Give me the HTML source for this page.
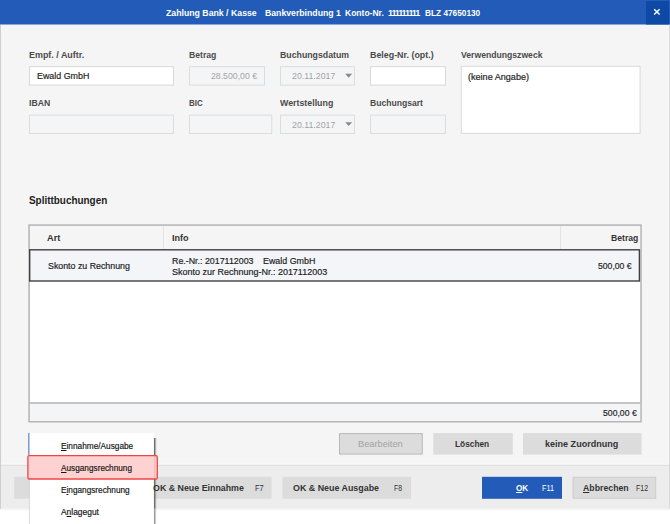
<!DOCTYPE html>
<html lang="de">
<head>
<meta charset="utf-8">
<title>Zahlung Bank / Kasse</title>
<style>
html,body{margin:0;padding:0;}
body{width:670px;height:524px;overflow:hidden;background:#fff;position:relative;font-family:"Liberation Sans",sans-serif;font-size:10px;color:#333;}
#bg{position:absolute;left:0;top:0;}
.t{position:absolute;white-space:nowrap;line-height:14px;height:14px;display:inline-block;transform-origin:0 50%;}
u{text-decoration:underline;text-underline-offset:1px;text-decoration-thickness:1px;}
</style>
</head>
<body>
<svg id="bg" width="670" height="524" viewBox="0 0 670 524">
<rect x="0" y="0" width="670" height="465" fill="#f5f5f5" />
<rect x="0" y="463.6" width="670" height="1" fill="#f9f9f9" />
<rect x="0" y="465" width="670" height="43.7" fill="#ededed" />
<rect x="0" y="464.8" width="670" height="1.1" fill="#dedede" />
<rect x="0" y="508.7" width="670" height="1.0" fill="#ededed" opacity="0.6"/>
<rect x="0" y="509.7" width="670" height="0.9" fill="#ededed" opacity="0.25"/>
<rect x="0" y="24.5" width="1" height="484.3" fill="#cfcfcf" />
<rect x="669" y="24.5" width="1" height="484.3" fill="#dadada" />
<rect x="0" y="0" width="670" height="24.5" fill="#225cb8" />
<rect x="646" y="1" width="23" height="23.5" fill="#0f49a6" />
<path d="M654.2 9.2 L659.6 14.6 M659.6 9.2 L654.2 14.6" stroke="#fff" stroke-width="1.45" fill="none"/>
<rect x="29" y="66.2" width="145" height="19.4" fill="#d9d9d9" /><rect x="30" y="67.2" width="143" height="17.4" fill="#fff" />
<rect x="189" y="66.2" width="76" height="19.4" fill="#dcdcdc" /><rect x="190" y="67.2" width="74" height="17.4" fill="#f4f5f7" />
<rect x="280" y="66.2" width="75" height="19.4" fill="#dcdcdc" /><rect x="281" y="67.2" width="73" height="17.4" fill="#f4f5f7" />
<rect x="370" y="66.2" width="76" height="19.4" fill="#d9d9d9" /><rect x="371" y="67.2" width="74" height="17.4" fill="#fff" />
<rect x="460.8" y="65.8" width="179.8" height="68.0" fill="#d9d9d9" /><rect x="461.8" y="66.8" width="177.8" height="66.0" fill="#fff" />
<rect x="29" y="114.6" width="145" height="19.4" fill="#dcdcdc" /><rect x="30" y="115.6" width="143" height="17.4" fill="#f4f5f7" />
<rect x="189" y="114.6" width="83.3" height="19.4" fill="#dcdcdc" /><rect x="190" y="115.6" width="81.3" height="17.4" fill="#f4f5f7" />
<rect x="280" y="114.6" width="75" height="19.4" fill="#dcdcdc" /><rect x="281" y="115.6" width="73" height="17.4" fill="#f4f5f7" />
<rect x="370" y="114.6" width="76" height="19.4" fill="#dcdcdc" /><rect x="371" y="115.6" width="74" height="17.4" fill="#f4f5f7" />
<path d="M345.2 73.8 L352.1 73.8 L348.65 77.7 Z" fill="#8a8a8a"/>
<path d="M345.2 122.2 L352.1 122.2 L348.65 126.10000000000001 Z" fill="#8a8a8a"/>
<rect x="28.3" y="224.3" width="613.5" height="198.2" fill="#b5b5b8" /><rect x="29.85" y="225.85" width="610.4" height="195.1" fill="#fff" />
<rect x="30" y="226" width="610.1" height="24" fill="#f5f5f5" />
<rect x="163.4" y="226" width="1" height="23" fill="#dadada" />
<rect x="164.4" y="226" width="1" height="23" fill="#fbfbfb" />
<rect x="560.4" y="226" width="1" height="23" fill="#dadada" />
<rect x="561.4" y="226" width="1" height="23" fill="#fbfbfb" />
<rect x="29" y="249.1" width="611.1" height="32.6" fill="#404040" /><rect x="30.4" y="250.5" width="608.3" height="29.8" fill="#f4f5f9" />
<rect x="30" y="402.3" width="610.1" height="1.5" fill="#ababad" />
<rect x="30" y="403.8" width="610.1" height="17.1" fill="#f4f5f7" />
<rect x="339" y="433.1" width="83.8" height="21.5" fill="#b9b9b9" /><rect x="340" y="434.1" width="81.8" height="19.5" fill="#dcdcdc" />
<rect x="433.3" y="433.1" width="79.5" height="21.5" fill="#dcdcdc" />
<rect x="523" y="433.1" width="118.5" height="21.5" fill="#dcdcdc" />
<rect x="14.2" y="476.8" width="119" height="22.0" fill="#dcdcdc" />
<rect x="143" y="476.8" width="128.6" height="22.0" fill="#dcdcdc" />
<rect x="282.4" y="476.8" width="128.6" height="22.0" fill="#dcdcdc" />
<rect x="482" y="476.8" width="80" height="22.0" fill="#225cb8" />
<rect x="572.5" y="476.8" width="83.7" height="22.0" fill="#cdcdcd" /><rect x="573.5" y="477.8" width="81.7" height="20.0" fill="#dcdcdc" />
<rect x="153.8" y="438" width="1.6" height="70.8" fill="#6e6e6e" />
<rect x="155.4" y="438" width="1.0" height="70.8" fill="#000" opacity="0.13"/>
<rect x="153.8" y="508.8" width="1.6" height="15.2" fill="#9a9a9a" />
<rect x="155.4" y="508.8" width="1.0" height="15.2" fill="#000" opacity="0.06"/>
<rect x="28.1" y="433" width="1.6" height="22" fill="#6f95d0" />
<rect x="29.7" y="433.2" width="124.1" height="91" fill="#fff" />
<rect x="28.9" y="479" width="0.9" height="45" fill="#d6d6d6" />
<rect x="27.9" y="455.7" width="129.4" height="23.3" rx="1.3" fill="#ffcccc" fill-opacity="0.88" stroke="#f04444" stroke-width="1.3"/>
</svg>
<span class="t" id="tt" style="left:165.5px;top:6.30px;font-size:9px;font-weight:bold;color:#fff;transform:scaleX(0.9697);">Zahlung Bank / Kasse</span>
<span class="t" id="tt2" style="left:265.2px;top:6.30px;font-size:9px;font-weight:bold;color:#fff;transform:scaleX(0.9654);">Bankverbindung 1</span>
<span class="t" id="tt2b" style="left:344.9px;top:6.30px;font-size:9px;font-weight:bold;color:#fff;transform:scaleX(0.9463);">Konto-Nr.</span>
<span class="t" id="tt2c" style="left:387.6px;top:6.30px;font-size:9px;font-weight:bold;color:#fff;transform:scaleX(1.0119);"><span style="letter-spacing:-1.15px">111111111</span></span>
<span class="t" id="tt3" style="left:424.9px;top:6.30px;font-size:9px;font-weight:bold;color:#fff;transform:scaleX(0.9193);">BLZ 47650130</span>
<span class="t" id="l1" style="left:28.7px;top:48.30px;font-size:9.1px;font-weight:bold;color:#4a4a4a;transform:scaleX(0.9813);">Empf. / Auftr.</span>
<span class="t" id="v1" style="left:37px;top:69.30px;font-size:9.1px;-webkit-text-stroke:0.18px #222;color:#222;transform:scaleX(0.9761);">Ewald GmbH</span>
<span class="t" id="l2" style="left:189px;top:48.30px;font-size:9.1px;font-weight:bold;color:#4a4a4a;transform:scaleX(0.9475);">Betrag</span>
<span class="t" id="v2" style="left:211.2px;top:69.30px;font-size:9.1px;color:#a3a3a3;transform:scaleX(0.9574);">28.500,00 €</span>
<span class="t" id="l3" style="left:280px;top:48.30px;font-size:9.1px;font-weight:bold;color:#4a4a4a;transform:scaleX(0.9631);">Buchungsdatum</span>
<span class="t" id="v3" style="left:292.4px;top:69.30px;font-size:9.1px;color:#a3a3a3;transform:scaleX(0.9656);">20.11.2017</span>
<span class="t" id="l4" style="left:370px;top:48.30px;font-size:9.1px;font-weight:bold;color:#4a4a4a;transform:scaleX(0.9759);">Beleg-Nr. (opt.)</span>
<span class="t" id="l5" style="left:460.5px;top:48.30px;font-size:9.1px;font-weight:bold;color:#4a4a4a;transform:scaleX(0.9485);">Verwendungszweck</span>
<span class="t" id="v5" style="left:468.3px;top:70.30px;font-size:9.1px;-webkit-text-stroke:0.18px #222;color:#222;transform:scaleX(0.9969);">(keine Angabe)</span>
<span class="t" id="l6" style="left:28.7px;top:96.30px;font-size:9.1px;font-weight:bold;color:#4a4a4a;transform:scaleX(0.9535);">IBAN</span>
<span class="t" id="l7" style="left:189px;top:96.30px;font-size:9.1px;font-weight:bold;color:#4a4a4a;transform:scaleX(0.8806);">BIC</span>
<span class="t" id="l8" style="left:280px;top:96.30px;font-size:9.1px;font-weight:bold;color:#4a4a4a;transform:scaleX(0.9707);">Wertstellung</span>
<span class="t" id="v8" style="left:292.4px;top:118.30px;font-size:9.1px;color:#a3a3a3;transform:scaleX(0.9656);">20.11.2017</span>
<span class="t" id="l9" style="left:370px;top:96.30px;font-size:9.1px;font-weight:bold;color:#4a4a4a;transform:scaleX(0.9448);">Buchungsart</span>
<span class="t" id="h1" style="left:29.3px;top:193.30px;font-size:11px;font-weight:bold;color:#222;transform:scaleX(0.9013);">Splittbuchungen</span>
<span class="t" id="c1" style="left:47.2px;top:231.30px;font-size:9.1px;font-weight:bold;color:#333;transform:scaleX(1.0197);">Art</span>
<span class="t" id="c2" style="left:172.2px;top:231.30px;font-size:9.1px;font-weight:bold;color:#333;transform:scaleX(0.9897);">Info</span>
<span class="t" id="c3" style="left:610.7px;top:231.30px;font-size:9.1px;font-weight:bold;color:#333;transform:scaleX(0.9475);">Betrag</span>
<span class="t" id="r1" style="left:47.5px;top:259.30px;font-size:9.1px;-webkit-text-stroke:0.18px #222;color:#222;transform:scaleX(0.9699);">Skonto zu Rechnung</span>
<span class="t" id="r2" style="left:172px;top:254.30px;font-size:9.1px;-webkit-text-stroke:0.18px #222;color:#222;transform:scaleX(0.9730);">Re.-Nr.: 2017112003</span>
<span class="t" id="r2b" style="left:262.8px;top:254.30px;font-size:9.1px;-webkit-text-stroke:0.18px #222;color:#222;transform:scaleX(0.9780);">Ewald GmbH</span>
<span class="t" id="r3" style="left:172px;top:265.30px;font-size:9.1px;-webkit-text-stroke:0.18px #222;color:#222;transform:scaleX(0.9881);">Skonto zur Rechnung-Nr.: 2017112003</span>
<span class="t" id="r4" style="left:598.4px;top:259.30px;font-size:9.1px;-webkit-text-stroke:0.18px #222;color:#222;transform:scaleX(0.9490);">500,00 €</span>
<span class="t" id="f1" style="left:603.3px;top:406.30px;font-size:9.1px;-webkit-text-stroke:0.18px #222;color:#222;transform:scaleX(0.9518);">500,00 €</span>
<span class="t" id="b1" style="left:358.1px;top:437.30px;font-size:9.1px;color:#a3a3a3;transform:scaleX(1.0159);">Bearbeiten</span>
<span class="t" id="b2" style="left:455.3px;top:437.30px;font-size:9.1px;font-weight:bold;color:#333;transform:scaleX(0.9143);">Löschen</span>
<span class="t" id="b3" style="left:545.2px;top:437.30px;font-size:9.1px;font-weight:bold;color:#333;transform:scaleX(0.9937);">keine Zuordnung</span>
<span class="t" id="b4" style="left:153.4px;top:481.30px;font-size:9.1px;font-weight:bold;color:#333;transform:scaleX(0.9724);">OK &amp; Neue Einnahme</span>
<span class="t" id="b4k" style="left:255px;top:481.30px;font-size:8.9px;color:#333;transform:scaleX(0.8302);">F7</span>
<span class="t" id="b5" style="left:292.7px;top:481.30px;font-size:9.1px;font-weight:bold;color:#333;transform:scaleX(0.9762);">OK &amp; Neue Ausgabe</span>
<span class="t" id="b5k" style="left:394.4px;top:481.30px;font-size:8.9px;color:#333;transform:scaleX(0.7722);">F8</span>
<span class="t" id="b6" style="left:515.5px;top:481.30px;font-size:9.1px;font-weight:bold;color:#fff;transform:scaleX(0.8934);"><u>O</u>K</span>
<span class="t" id="b6k" style="left:541.5px;top:481.30px;font-size:8.9px;color:#fff;transform:scaleX(0.8128);">F11</span>
<span class="t" id="b7" style="left:582.9px;top:481.30px;font-size:9.1px;font-weight:bold;color:#333;transform:scaleX(0.9618);"><u>A</u>bbrechen</span>
<span class="t" id="b7k" style="left:635.5px;top:481.30px;font-size:8.9px;color:#333;transform:scaleX(0.7845);">F12</span>
<span class="t" id="m1" style="left:60.6px;top:439.30px;font-size:9.1px;-webkit-text-stroke:0.18px #151515;color:#151515;transform:scaleX(0.9094);"><u>E</u>innahme/Ausgabe</span>
<span class="t" id="m2" style="left:60.6px;top:461.30px;font-size:9.1px;-webkit-text-stroke:0.18px #151515;color:#151515;transform:scaleX(0.9057);"><u>A</u>usgangsrechnung</span>
<span class="t" id="m3" style="left:60.6px;top:483.30px;font-size:9.1px;-webkit-text-stroke:0.18px #151515;color:#151515;transform:scaleX(0.9054);">E<u>i</u>ngangsrechnung</span>
<span class="t" id="m4" style="left:60.6px;top:505.30px;font-size:9.1px;-webkit-text-stroke:0.18px #151515;color:#151515;transform:scaleX(0.9247);">A<u>n</u>lagegut</span>
</body>
</html>
